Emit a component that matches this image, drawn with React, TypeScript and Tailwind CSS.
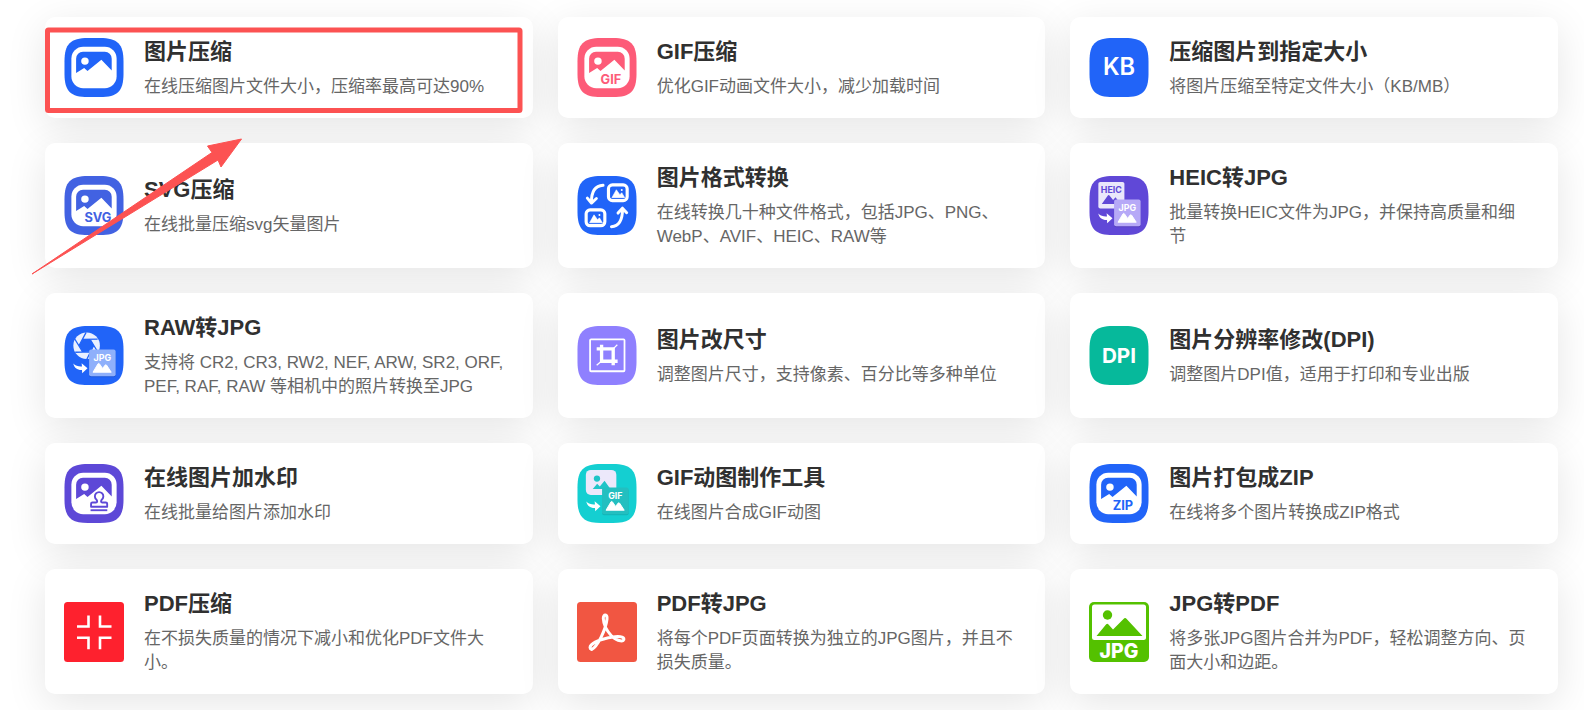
import React from 'react';

interface Tool {
  id: string;
  title: string;
  description: string;
  icon: React.ReactNode;
}

const BLUE = '#2164f8';

function Squircle({ color, children }: { color: string; children: React.ReactNode }) {
  return (
    <svg viewBox="-0.5 0 61 61" className="h-[60px] w-[60px] shrink-0" fontFamily="Inter, sans-serif" aria-hidden="true">
      <path d="M0 24C0 6 6 0 24 0h12c18 0 24 6 24 24v12c0 18-6 24-24 24H24C6 60 0 54 0 36z" fill={color} />
      {children}
    </svg>
  );
}

// Framed landscape used by all the "picture" tools
function PictureIcon({ color, label, children }: { color: string; label?: string; children?: React.ReactNode }) {
  return (
    <Squircle color={color}>
      <rect x="7" y="9" width="46" height="42" rx="12" fill="#fff" />
      <path d="M11.8 35.500V21a7 7 0 0 1 7-7H41a7 7 0 0 1 7 7v12L37.500 22 23.400 33.600l-3.400-3z" fill={color} />
      <circle cx="20.8" cy="23.5" r="3.8" fill="#fff" />
      {label && (
        <text x="34" y="47" textAnchor="middle" fontSize="13" fontWeight="700" fill={color}>
          {label}
        </text>
      )}
      {children}
    </Squircle>
  );
}

function TextIcon({ color, label, size, weight }: { color: string; label: string; size: number; weight: number }) {
  return (
    <Squircle color={color}>
      <text x="30" y="38" textAnchor="middle" fontSize={size} fontWeight={weight} fill="#fff">
        {label}
      </text>
    </Squircle>
  );
}

// Small card in the lower right corner with the arrow pointing at it
function TargetCard({ label, fill }: { label: string; fill: string }) {
  return (
    <>
      <path d="M9 38.2c2.4 2.600 5.400 3.200 8.800 3l-.4-3.400 6 5.200-5.400 5-.2-3.200C13 45 9.800 42.600 9 38.200z" fill="#fff" />
      <rect x="25" y="25" width="27" height="27" rx="2" fill="#000" opacity="0.12" />
      <rect x="25" y="24" width="27" height="27" rx="2" fill={fill} />
      <text x="38.5" y="35.2" textAnchor="middle" fontSize="9" fontWeight="700" fill="#fff">
        {label}
      </text>
      <path
        d="M29 47l5-8.400c.5-.8 1.100-.8 1.600 0l3.200 4.600 2.300-3.200c.6-.8 1.200-.8 1.800 0l4.600 7z"
        fill="#fff"
        stroke="#fff"
        strokeLinejoin="round"
      />
    </>
  );
}

function MiniPicture({ x, y }: { x: number; y: number }) {
  return (
    <g transform={`translate(${x} ${y})`}>
      <rect width="19" height="16" rx="4" fill="none" stroke="#fff" strokeWidth="3.2" />
      <path d="M3.500 13l4.500-8 3.600 5 1.900-2 3 5z" fill="#fff" stroke="#fff" strokeWidth="0.6" />
      <circle cx="13.5" cy="5.2" r="1" fill="#fff" />
    </g>
  );
}

const tools: Tool[] = [
  {
    id: 'compress-image',
    title: '图片压缩',
    description: '在线压缩图片文件大小，压缩率最高可达90%',
    icon: <PictureIcon color={BLUE} />,
  },
  {
    id: 'compress-gif',
    title: 'GIF压缩',
    description: '优化GIF动画文件大小，减少加载时间',
    icon: <PictureIcon color="#fd5b78" label="GIF" />,
  },
  {
    id: 'compress-to-size',
    title: '压缩图片到指定大小',
    description: '将图片压缩至特定文件大小（KB/MB）',
    icon: <TextIcon color={BLUE} label="KB" size={24} weight={600} />,
  },
  {
    id: 'compress-svg',
    title: 'SVG压缩',
    description: '在线批量压缩svg矢量图片',
    icon: <PictureIcon color="#4262e2" label="SVG" />,
  },
  {
    id: 'convert-image',
    title: '图片格式转换',
    description: '在线转换几十种文件格式，包括JPG、PNG、WebP、AVIF、HEIC、RAW等',
    icon: (
      <Squircle color={BLUE}>
        <MiniPicture x={31.5} y={9} />
        <MiniPicture x={8.8} y={34.5} />
        <g fill="none" stroke="#fff" strokeWidth="3" strokeLinecap="round" strokeLinejoin="round">
          <path d="M26 9.500C18 10 14 15.500 14.200 27M10 22.500l4.200 5 5-4.600" />
          <path d="M34.500 51.500c7.500-.5 11.300-6.500 11.300-18M41.200 37.700l4.500-5 4.300 4.600" />
        </g>
      </Squircle>
    ),
  },
  {
    id: 'heic-to-jpg',
    title: 'HEIC转JPG',
    description: '批量转换HEIC文件为JPG，并保持高质量和细节',
    icon: (
      <Squircle color="#6048d7">
        <rect x="9" y="6" width="26.5" height="27" rx="2" fill="#eae7fb" />
        <text x="22.2" y="17" textAnchor="middle" fontSize="9" fontWeight="700" fill="#6048d7">
          HEIC
        </text>
        <path d="M12.500 28.500l6-8.500c.6-.8 1.400-.8 2 0l3.500 4.500 2.500-3 5 7z" fill="#6048d7" />
        <TargetCard label="JPG" fill="#b6a9f7" />
      </Squircle>
    ),
  },
  {
    id: 'raw-to-jpg',
    title: 'RAW转JPG',
    description: '支持将 CR2, CR3, RW2, NEF, ARW, SR2, ORF, PEF, RAF, RAW 等相机中的照片转换至JPG',
    icon: (
      <Squircle color={BLUE}>
        <circle cx="22.5" cy="20" r="13.5" fill="#eaf0ff" />
        <path d="M18.500 13.500l7.400-.2 3.900 6.300-3.600 6.700-7.600.2-3.800-6.500z" fill={BLUE} />
        <path
          d="M14.800 20L22 6.500M18.500 13.500l15.200-.2M25.900 13.300l8.100 13.400M29.800 19.600l-7.200 14.400M26.200 26.300l-15.300.4M18.600 26.500L10.300 13"
          stroke={BLUE}
          strokeWidth="1.3"
        />
        <TargetCard label="JPG" fill="#8fb0fb" />
      </Squircle>
    ),
  },
  {
    id: 'resize-image',
    title: '图片改尺寸',
    description: '调整图片尺寸，支持像素、百分比等多种单位',
    icon: (
      <Squircle color="#8f80fe">
        <g fill="none" stroke="#fff">
          <rect x="12.800" y="13.500" width="35" height="32.500" rx="1" strokeWidth="1.8" />
          <path d="M24.500 19v16.800h16.300M19.500 23.200h16.800V40" strokeWidth="3.4" />
          <path d="M36.500 23l4-4M24 36l-4.500 4" strokeWidth="1.3" />
        </g>
      </Squircle>
    ),
  },
  {
    id: 'change-dpi',
    title: '图片分辨率修改(DPI)',
    description: '调整图片DPI值，适用于打印和专业出版',
    icon: <TextIcon color="#06b99b" label="DPI" size={21} weight={700} />,
  },
  {
    id: 'watermark',
    title: '在线图片加水印',
    description: '在线批量给图片添加水印',
    icon: (
      <PictureIcon color="#5d48d7">
        <g fill="#fff" stroke="#5d48d7" strokeWidth="1.9" strokeLinejoin="round">
          <path d="M27 43.500v-3c0-.8.600-1.300 1.400-1.300h3.600c1.500 0 1.600-1.400.5-3a4.300 4.300 0 1 1 5.400 0c-1.100 1.600-1 3 .5 3h3.600c.8 0 1.400.5 1.400 1.300v3z" />
          <path d="M26.500 47h17" />
        </g>
      </PictureIcon>
    ),
  },
  {
    id: 'gif-maker',
    title: 'GIF动图制作工具',
    description: '在线图片合成GIF动图',
    icon: (
      <Squircle color="#14cfd1">
        <rect x="8.5" y="6" width="31" height="25.5" rx="5" fill="#ece8fb" />
        <circle cx="19.8" cy="14.8" r="3.2" fill="#1fc4c7" />
        <path d="M15.500 25.500l4.500-5.500 2.700 3L27.500 17l6 8.500z" fill="#1fc4c7" />
        <TargetCard label="GIF" fill="#23bfc0" />
      </Squircle>
    ),
  },
  {
    id: 'zip-images',
    title: '图片打包成ZIP',
    description: '在线将多个图片转换成ZIP格式',
    icon: <PictureIcon color={BLUE} label="ZIP" />,
  },
  {
    id: 'compress-pdf',
    title: 'PDF压缩',
    description: '在不损失质量的情况下减小和优化PDF文件大小。',
    icon: (
      <svg viewBox="0 0 60 60" className="h-[60px] w-[60px] shrink-0" aria-hidden="true">
        <rect width="60" height="60" rx="3.5" fill="#fe212e" />
        <path
          d="M13 24.500h11.500V13.500M47.500 24.500H36V13.500M13 35.800h11.500v11.500M47.500 35.800H36v11.500"
          fill="none"
          stroke="#fff"
          strokeWidth="2.6"
        />
      </svg>
    ),
  },
  {
    id: 'pdf-to-jpg',
    title: 'PDF转JPG',
    description: '将每个PDF页面转换为独立的JPG图片，并且不损失质量。',
    icon: (
      <svg viewBox="0 0 60 60" className="h-[60px] w-[60px] shrink-0" aria-hidden="true">
        <rect width="60" height="60" rx="3.5" fill="#f15642" />
        <path
          d="M14.500 47.500C10.500 45.500 15 40.500 24 37.700c9-2.800 21-4.700 22.800-1.200 1.200 3.500-6.300 3.500-12.300-2.500C29.500 28.500 26.500 21 26.300 16.500c0-5 4.200-4.500 3.700.5C29 27 20.500 45 14.500 47.500z"
          fill="none"
          stroke="#fff"
          strokeWidth="3"
          strokeLinejoin="round"
        />
      </svg>
    ),
  },
  {
    id: 'jpg-to-pdf',
    title: 'JPG转PDF',
    description: '将多张JPG图片合并为PDF，轻松调整方向、页面大小和边距。',
    icon: (
      <svg viewBox="0 0 60 60" className="h-[60px] w-[60px] shrink-0" fontFamily="Inter, sans-serif" aria-hidden="true">
        <rect width="60" height="60" rx="5" fill="#54c100" />
        <rect x="3" y="2.5" width="54" height="35.5" rx="2.5" fill="#fff" />
        <circle cx="18.5" cy="13" r="4.7" fill="#54c100" />
        <path d="M7.500 34l9.500-11.500c.8-1 1.700-1 2.500 0l4.500 5L34.500 17c1-1.300 2.200-1.300 3.200 0L53.500 34z" fill="#54c100" />
        <text x="30" y="56" textAnchor="middle" fontSize="19.5" fontWeight="800" fill="#fff">
          JPG
        </text>
      </svg>
    ),
  },
];

function ToolCard({ tool }: { tool: Tool }) {
  return (
    <a
      href={`#${tool.id}`}
      className="flex items-center gap-5 rounded-[10px] bg-white py-[19px] pr-7 pl-[19px] shadow-[0_10px_40px_rgba(0,0,0,0.1)]"
    >
      {tool.icon}
      <div className="min-w-0 flex-1">
        <h2 className="mb-[7px] text-[22px] leading-8 font-bold text-[#303030]">{tool.title}</h2>
        <p className="text-[17px] leading-6 text-[#666]">{tool.description}</p>
      </div>
    </a>
  );
}

export default function App() {
  return (
    <main
      lang="zh-CN"
      className="relative min-h-screen overflow-hidden bg-white pt-[17px] pr-[26px] pb-4 pl-[45px] font-['Liberation_Sans','Noto_Sans_CJK_SC',sans-serif]"
    >
      <div className="grid grid-cols-3 gap-[25px]">
        {tools.map((tool) => (
          <ToolCard key={tool.id} tool={tool} />
        ))}
      </div>

      {/* Highlight on the first tool */}
      <svg className="pointer-events-none absolute top-0 left-0" width="540" height="290" aria-hidden="true">
        <rect x="47.5" y="30" width="472.5" height="80.5" rx="1" fill="none" stroke="#fc5252" strokeWidth="5" />
        <path d="M32 274L212 152.500l-4.500-6.500 34-7-20.500 28-3-7z" fill="#fc5252" stroke="#fc5252" strokeLinejoin="round" />
      </svg>
    </main>
  );
}
